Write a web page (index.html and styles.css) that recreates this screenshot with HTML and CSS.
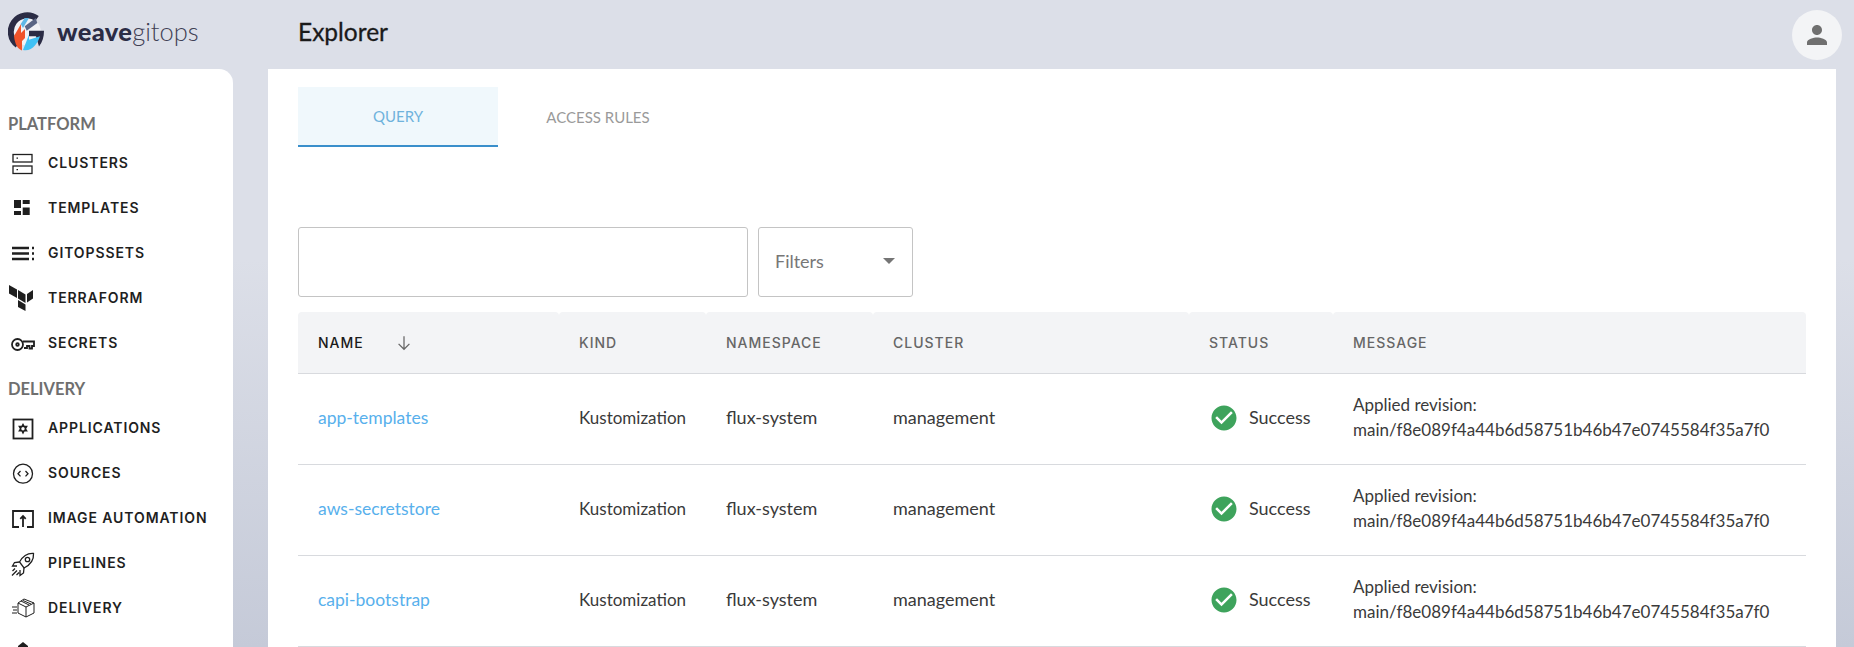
FILE: index.html
```html
<!DOCTYPE html>
<html>
<head>
    <title>Explorer</title>
    <meta name="viewport" content="width=device-width, initial-scale=1">
    <link rel="stylesheet" href="styles.css">
</head>
<body>
<header class="topbar">
    <div class="brand">
        <svg class="brand-mark" viewBox="0 0 40 40">
            <circle cx="18.700" cy="19.300" r="14" fill="#f1f2f6"/>
            <path d="M29 6.500A15.500 15.500 0 1 0 9.500 33" fill="none" stroke="#2b2c45" stroke-width="6"/>
            <path d="M21 18.700H36C36 25 34.500 30 31 34.500L28 24.300H21Z" fill="#2b2c45"/>
            <path d="M6 24L13 12V21L17 17V26L14 29V38.500C10 37 7 33 6 24Z" fill="#f0532a"/>
            <path d="M12.700 12L16.700 6H21L15 16Z" fill="#5fb8e6"/>
            <path d="M16.700 14.300L27.700 6L29.300 11L18.700 18.700Z" fill="#5b6685"/>
            <path d="M15 38L21 22.700V27.700L32 24.300C30 31 24 40 15 38Z" fill="#3fc1f5"/>
        </svg>
        <span class="brand-name"><b>weave</b>gitops</span>
    </div>
    <h1 class="page-title">Explorer</h1>
    <div class="avatar">
        <svg viewBox="0 0 24 24"><path d="M12 12c2.21 0 4-1.79 4-4s-1.79-4-4-4-4 1.79-4 4 1.79 4 4 4zm0 2c-2.67 0-8 1.34-8 4v2h16v-2c0-2.66-5.33-4-8-4z"/></svg>
    </div>
</header>

<div class="layout">
    <nav class="sidebar">
        <h2 class="nav-heading">PLATFORM</h2>
        <a class="nav-item">
            <svg viewBox="0 0 28 28" class="line"><rect x="5" y="5.500" width="19" height="7.500"/><rect x="5" y="17" width="19" height="7.500"/><path d="M8.500 9.200h1.500M8.500 20.700h1.500"/></svg>
            CLUSTERS
        </a>
        <a class="nav-item">
            <svg viewBox="0 0 28 28" class="solid"><rect x="6" y="6" width="7" height="8"/><rect x="6" y="17" width="7" height="4"/><rect x="14.700" y="6" width="7" height="4"/><rect x="14.700" y="13.500" width="7" height="7.500"/></svg>
            TEMPLATES
        </a>
        <a class="nav-item">
            <svg viewBox="0 0 28 28" class="line heavy"><path d="M4 9h17M4 14.500h17M4 20h17M24 9h2M24 14.500h2M24 20h2"/></svg>
            GITOPSSETS
        </a>
        <a class="nav-item">
            <svg viewBox="0 0 28 28" class="solid"><path d="M1 1L9 5.500V14L1 9.500Z"/><path d="M10 6L17.500 10.500V19L10 14.500Z"/><path d="M25 6L19 10V18.500L25 14.500Z"/><path d="M10 16L17.500 20.500V27L10 23Z"/></svg>
            TERRAFORM
        </a>
        <a class="nav-item">
            <svg viewBox="0 0 28 28" class="line bold"><circle cx="9.500" cy="15.500" r="5.500"/><circle cx="9.500" cy="15.500" r="1.300"/><path d="M15 12.500H26V17H24V19.500H21.500V17H19V19H16"/></svg>
            SECRETS
        </a>

        <h2 class="nav-heading spaced">DELIVERY</h2>
        <a class="nav-item">
            <svg viewBox="0 0 28 28"><rect x="5.500" y="5.500" width="19" height="19" class="line bold"/><path d="M15 9L16.500 11.800H19.900L18.200 14.700L19.900 17.600H16.500L15 20.400L13.500 17.600H10.100L11.800 14.700L10.100 11.800H13.500Z" class="solid"/><circle cx="15" cy="14.700" r="1.700" fill="#ffffff"/></svg>
            APPLICATIONS
        </a>
        <a class="nav-item">
            <svg viewBox="0 0 28 28" class="line"><circle cx="15" cy="14.700" r="9.500"/><path d="M12.500 12L10 14.700L12.500 17.400M17.500 12L20 14.700L17.500 17.400"/></svg>
            SOURCES
        </a>
        <a class="nav-item">
            <svg viewBox="0 0 28 28" class="line bold"><path d="M11 23H5V7H25V23H19"/><path d="M15 23V12M12.300 14.800L15 12L17.700 14.800"/></svg>
            IMAGE AUTOMATION
        </a>
        <a class="nav-item">
            <svg viewBox="0 0 28 28" class="line"><path d="M25.500 4.500C19 4 15 7 11.500 13L16 19C22 16 26 11 25.500 4.500Z"/><circle cx="19.500" cy="10.500" r="2.200"/><path d="M11.500 13L6.500 13.500L4.500 17L9 17M16 19L15.500 24L12 26.500L12 21M9 21.500L4 26.500M7 19.500L4.500 22M11 23.500L8.500 26"/></svg>
            PIPELINES
        </a>
        <a class="nav-item">
            <svg viewBox="0 0 28 28" class="line thin"><path d="M16 5L26 9V19L18 23L10 19V9Z"/><path d="M10 9L18 13L26 9M18 13V23M13 7L21 11M15 6.500L23 10M4 13H9M5 16H9M4 19H9"/></svg>
            DELIVERY
        </a>
        <a class="nav-item">
            <svg viewBox="0 0 28 28" class="solid"><path d="M15 3L20 7V18H10V7Z"/></svg>
        </a>
    </nav>

    <main class="content">
        <div class="tabs">
            <a class="tab active">QUERY</a>
            <a class="tab">ACCESS RULES</a>
        </div>

        <div class="search-row">
            <input class="search-input" type="text">
            <div class="filter-select">
                <span>Filters</span>
                <i class="caret"></i>
            </div>
        </div>

        <table class="results">
            <colgroup>
                <col class="col-name"><col class="col-kind"><col class="col-ns"><col class="col-cluster"><col class="col-status"><col>
            </colgroup>
            <thead>
                <tr>
                    <th class="sorted">
                        <span class="sort-head">NAME
                            <svg viewBox="0 0 24 24"><path d="M12 4V19.500M5.500 13L12 19.500L18.500 13"/></svg>
                        </span>
                    </th>
                    <th>KIND</th>
                    <th>NAMESPACE</th>
                    <th>CLUSTER</th>
                    <th>STATUS</th>
                    <th>MESSAGE</th>
                </tr>
            </thead>
            <tbody>
                <tr>
                    <td><a class="row-link">app-templates</a></td>
                    <td>Kustomization</td>
                    <td class="wide-text">flux-system</td>
                    <td class="wide-text">management</td>
                    <td><span class="status"><svg viewBox="0 0 24 24"><path d="M12 2C6.480 2 2 6.480 2 12s4.480 10 10 10 10-4.480 10-10S17.520 2 12 2zm-2 15l-5-5 1.410-1.410L10 14.170l7.590-7.590L19 8l-9 9z"/></svg>Success</span></td>
                    <td>Applied revision:<br>main/f8e089f4a44b6d58751b46b47e0745584f35a7f0</td>
                </tr>
                <tr>
                    <td><a class="row-link">aws-secretstore</a></td>
                    <td>Kustomization</td>
                    <td class="wide-text">flux-system</td>
                    <td class="wide-text">management</td>
                    <td><span class="status"><svg viewBox="0 0 24 24"><path d="M12 2C6.480 2 2 6.480 2 12s4.480 10 10 10 10-4.480 10-10S17.520 2 12 2zm-2 15l-5-5 1.410-1.410L10 14.170l7.590-7.590L19 8l-9 9z"/></svg>Success</span></td>
                    <td>Applied revision:<br>main/f8e089f4a44b6d58751b46b47e0745584f35a7f0</td>
                </tr>
                <tr>
                    <td><a class="row-link">capi-bootstrap</a></td>
                    <td>Kustomization</td>
                    <td class="wide-text">flux-system</td>
                    <td class="wide-text">management</td>
                    <td><span class="status"><svg viewBox="0 0 24 24"><path d="M12 2C6.480 2 2 6.480 2 12s4.480 10 10 10 10-4.480 10-10S17.520 2 12 2zm-2 15l-5-5 1.410-1.410L10 14.170l7.590-7.590L19 8l-9 9z"/></svg>Success</span></td>
                    <td>Applied revision:<br>main/f8e089f4a44b6d58751b46b47e0745584f35a7f0</td>
                </tr>
            </tbody>
        </table>
    </main>
</div>
</body>
</html>
```

FILE: styles.css
```css
* {
    box-sizing: border-box;
}

html, body {
    height: 647px;
    margin: 0;
    overflow: hidden;
}

body {
    display: flex;
    flex-direction: column;
    font-family: "Lato", "Liberation Sans", sans-serif;
    color: #3a3a3a;
    background: linear-gradient(to bottom, #dcdfe8 0%, #dcdfe8 40%, #c5cad8 100%);
}

.topbar {
    display: flex;
    align-items: center;
    height: 69px;
    flex: none;
    padding: 0 12px 6px 8px;
}

.brand {
    display: flex;
    align-items: center;
    width: 290px;
}

.brand-mark {
    width: 40px;
    height: 40px;
}

.brand-name {
    margin-left: 9px;
    margin-bottom: 2px;
    font-size: 25.500px;
    font-weight: 300;
    color: #3f4054;
}

.brand-name b {
    font-weight: 900;
    letter-spacing: 0.300px;
    color: #2b2c45;
}

.page-title {
    margin: 0 0 1px;
    font-size: 24.500px;
    font-weight: 400;
    -webkit-text-stroke: 0.300px #1a1a1a;
    color: #1a1a1a;
}

.avatar {
    display: flex;
    align-items: center;
    justify-content: center;
    width: 50px;
    height: 50px;
    margin-left: auto;
    margin-top: 6px;
    border-radius: 50%;
    background-color: #f3f4f6;
}

.avatar svg {
    width: 30px;
    height: 30px;
    fill: #6f6f6f;
}

.layout {
    display: flex;
    flex: 1;
    gap: 35px;
    min-height: 0;
    padding-right: 18px;
}

.sidebar {
    width: 233px;
    flex: none;
    padding-top: 43px;
    overflow: hidden;
    background-color: #ffffff;
    border-top-right-radius: 14px;
}

.nav-heading {
    margin: 0 0 4px;
    padding-left: 8px;
    font-size: 16.500px;
    line-height: 24px;
    font-weight: 700;
    color: #6f6f6f;
}

.nav-heading.spaced {
    margin-top: 12px;
}

.nav-item {
    display: flex;
    align-items: center;
    height: 45px;
    padding-left: 8px;
    font-family: "Inter", "Liberation Sans", sans-serif;
    font-size: 14px;
    font-weight: 600;
    letter-spacing: 0.900px;
    color: #1f1f1f;
}

.nav-item svg {
    width: 28px;
    height: 28px;
    margin-right: 12px;
    flex: none;
}

.line {
    fill: none;
    stroke: #1f1f1f;
    stroke-width: 1.300;
}

.line.bold {
    stroke-width: 1.800;
}

.line.heavy {
    stroke-width: 2.400;
}

.line.thin {
    stroke-width: 1;
}

.solid {
    fill: #1f1f1f;
}

.content {
    flex: 1;
    min-width: 0;
    padding: 18px 30px 0;
    background-color: #ffffff;
}

.tabs {
    display: flex;
    height: 60px;
}

.tab {
    display: flex;
    align-items: center;
    justify-content: center;
    width: 200px;
    font-size: 15px;
    color: #9a9a9a;
}

.tab.active {
    color: #6fb3dc;
    background-color: #f0f8fc;
    border-bottom: 2px solid #3a8fcb;
}

.search-row {
    display: flex;
    gap: 10px;
    margin-top: 80px;
}

.search-input {
    width: 450px;
    height: 70px;
    border: 1px solid #c4c4c4;
    border-radius: 3px;
    background: #ffffff;
}

.filter-select {
    display: flex;
    align-items: center;
    justify-content: space-between;
    width: 155px;
    height: 70px;
    padding: 0 17px 2px 16px;
    border: 1px solid #c4c4c4;
    border-radius: 3px;
    font-size: 18px;
    color: #777777;
}

.caret {
    width: 0;
    height: 0;
    border-left: 6.500px solid transparent;
    border-right: 6.500px solid transparent;
    border-top: 6.500px solid #757575;
}

.results {
    width: 1508px;
    margin-top: 15px;
    border-collapse: separate;
    border-spacing: 0;
    table-layout: fixed;
    font-size: 17px;
}

.col-name { width: 261px; }
.col-kind { width: 147px; }
.col-ns { width: 167px; }
.col-cluster { width: 316px; }
.col-status { width: 144px; }

.results th {
    height: 62px;
    padding: 0 20px;
    text-align: left;
    font-family: "Inter", "Liberation Sans", sans-serif;
    font-size: 14px;
    font-weight: 500;
    letter-spacing: 1px;
    color: #666666;
    background-color: #f3f4f6;
    border-bottom: 1px solid #d8dade;
    border-radius: 4px 4px 0 0;
}

.results th.sorted {
    color: #1a1a1a;
}

.sort-head {
    display: flex;
    align-items: center;
    gap: 30px;
}

.sort-head svg {
    width: 20px;
    height: 20px;
    fill: none;
    stroke: #666666;
    stroke-width: 1.500;
}

.results td {
    height: 91px;
    padding: 0 20px 4px;
    line-height: 25px;
    border-bottom: 1px solid #d8dade;
    white-space: nowrap;
}

.results td.wide-text {
    font-size: 18px;
}

.row-link {
    font-size: 17.500px;
    color: #58b0ec;
}

.status {
    display: flex;
    align-items: center;
    gap: 10px;
    font-size: 18px;
}

.status svg {
    width: 30px;
    height: 30px;
    margin-top: 2px;
    fill: #3ea35c;
}
```
